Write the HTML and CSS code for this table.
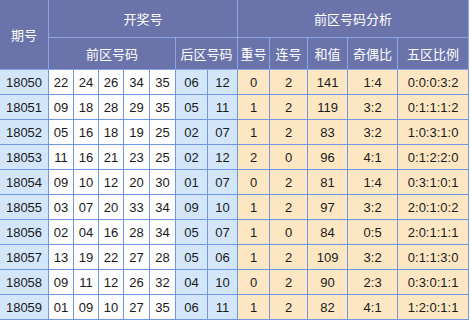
FILE: index.html
```html
<!DOCTYPE html>
<html>
<head>
<meta charset="utf-8">
<link rel="stylesheet" href="styles.css">
</head>
<body>
<table class="draw">
  <colgroup>
    <col class="w48"><col class="w25"><col class="w25"><col class="w25"><col class="w26"><col class="w26"><col class="w32"><col class="w30"><col class="w32"><col class="w38"><col class="w40"><col class="w50"><col class="w71">
  </colgroup>
  <thead>
    <tr class="h1">
      <th rowspan="2">期号</th>
      <th colspan="7">开奖号</th>
      <th colspan="5">前区号码分析</th>
    </tr>
    <tr class="h2">
      <th colspan="5">前区号码</th>
      <th colspan="2">后区号码</th>
      <th>重号</th><th>连号</th><th>和值</th><th>奇偶比</th><th>五区比例</th>
    </tr>
  </thead>
  <tbody>
    <tr><td class="issue">18050</td><td>22</td><td>24</td><td>26</td><td>34</td><td>35</td><td class="back">06</td><td class="back">12</td><td class="an">0</td><td class="an">2</td><td class="an">141</td><td class="an">1:4</td><td class="an">0:0:0:3:2</td></tr>
    <tr><td class="issue">18051</td><td>09</td><td>18</td><td>28</td><td>29</td><td>35</td><td class="back">05</td><td class="back">11</td><td class="an">1</td><td class="an">2</td><td class="an">119</td><td class="an">3:2</td><td class="an">0:1:1:1:2</td></tr>
    <tr><td class="issue">18052</td><td>05</td><td>16</td><td>18</td><td>19</td><td>25</td><td class="back">02</td><td class="back">07</td><td class="an">1</td><td class="an">2</td><td class="an">83</td><td class="an">3:2</td><td class="an">1:0:3:1:0</td></tr>
    <tr><td class="issue">18053</td><td>11</td><td>16</td><td>21</td><td>23</td><td>25</td><td class="back">02</td><td class="back">12</td><td class="an">2</td><td class="an">0</td><td class="an">96</td><td class="an">4:1</td><td class="an">0:1:2:2:0</td></tr>
    <tr><td class="issue">18054</td><td>09</td><td>10</td><td>12</td><td>20</td><td>30</td><td class="back">01</td><td class="back">07</td><td class="an">0</td><td class="an">2</td><td class="an">81</td><td class="an">1:4</td><td class="an">0:3:1:0:1</td></tr>
    <tr><td class="issue">18055</td><td>03</td><td>07</td><td>20</td><td>33</td><td>34</td><td class="back">09</td><td class="back">10</td><td class="an">1</td><td class="an">2</td><td class="an">97</td><td class="an">3:2</td><td class="an">2:0:1:0:2</td></tr>
    <tr><td class="issue">18056</td><td>02</td><td>04</td><td>16</td><td>28</td><td>34</td><td class="back">05</td><td class="back">07</td><td class="an">1</td><td class="an">0</td><td class="an">84</td><td class="an">0:5</td><td class="an">2:0:1:1:1</td></tr>
    <tr><td class="issue">18057</td><td>13</td><td>19</td><td>22</td><td>27</td><td>28</td><td class="back">05</td><td class="back">06</td><td class="an">1</td><td class="an">2</td><td class="an">109</td><td class="an">3:2</td><td class="an">0:1:1:3:0</td></tr>
    <tr><td class="issue">18058</td><td>09</td><td>11</td><td>12</td><td>26</td><td>32</td><td class="back">04</td><td class="back">10</td><td class="an">0</td><td class="an">2</td><td class="an">90</td><td class="an">2:3</td><td class="an">0:3:0:1:1</td></tr>
    <tr><td class="issue">18059</td><td>01</td><td>09</td><td>10</td><td>27</td><td>35</td><td class="back">06</td><td class="back">11</td><td class="an">1</td><td class="an">2</td><td class="an">82</td><td class="an">4:1</td><td class="an">1:2:0:1:1</td></tr>
  </tbody>
</table>
</body>
</html>
```
FILE: styles.css
```css
html, body {
  margin: 0;
  padding: 0;
  background: #ffffff;
}
.draw {
  border-collapse: collapse;
  table-layout: fixed;
  width: 469px;
  margin-top: -1px;
  margin-left: -1px;
  font-family: "Liberation Sans", Arial, "Noto Sans CJK SC", sans-serif;
  font-size: 13px;
  color: #1a1a1a;
}
.w48 { width: 49px; }
.w25 { width: 25px; }
.w26 { width: 26px; }
.w32 { width: 32px; }
.w30 { width: 30px; }
.w38 { width: 38px; }
.w40 { width: 40px; }
.w50 { width: 50px; }
.w71 { width: 71px; }
.draw th {
  background: #6a74aa;
  color: #ffffff;
  font-weight: normal;
  font-family: "Noto Sans CJK SC", sans-serif;
  font-size: 13px;
  border: 1px solid #8aa5e8;
  padding: 0;
  text-align: center;
}
.h1 { height: 38px; }
.h2 { height: 32px; }
.draw td {
  border: 1px solid #6f97e4;
  padding: 0;
  height: 24px;
  text-align: center;
  background: #fdfdfd;
}
.draw td.issue { background: #d3e6f9; }
.draw td.back { background: #d3e6f9; }
.draw td.an { background: #fde7c3; }
```
